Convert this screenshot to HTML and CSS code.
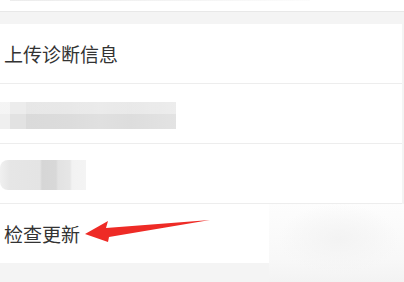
FILE: index.html
```html
<!DOCTYPE html>
<html lang="zh">
<head>
<meta charset="utf-8">
<link rel="stylesheet" href="styles.css">
</head>
<body>
<div class="top-strip"><span class="ghost-text"></span></div>
<div class="card">
  <div class="row"><span class="label">上传诊断信息</span></div>
  <div class="row"><span class="blob blob-long"></span></div>
  <div class="row"><span class="blob blob-short"></span></div>
  <div class="row last">
    <span class="label">检查更新</span>
    <svg class="arrow" width="130" height="26" viewBox="0 0 130 26">
      <polygon points="0,15 23,2 21,9 125,1 24,18 23,23" fill="#ee2b26"/>
    </svg>
  </div>
</div>
<div class="haze"></div>
</body>
</html>
```
FILE: styles.css
```css
html, body {
  margin: 0;
  padding: 0;
}
body {
  width: 404px;
  height: 282px;
  overflow: hidden;
  background: #f4f4f4;
  font-family: "Noto Sans CJK SC", "Noto Sans", sans-serif;
  position: relative;
}
.top-strip {
  height: 12px;
  background: #fff;
  border-bottom: 1px solid #e8e8e8;
  box-sizing: border-box;
  display: flex;
  align-items: flex-start;
  padding-left: 10px;
}
.ghost-text {
  width: 300px;
  height: 1px;
  background: linear-gradient(90deg, #ececec, #f4f4f4 60%, #fcfcfc);
}
.card {
  margin-top: 12px;
  background: #fff;
  margin-right: 2px;
}
.row {
  height: 59px;
  border-bottom: 1px solid #ededed;
  display: flex;
  align-items: center;
}
.row.last {
  border-bottom: none;
}
.label {
  font-size: 19px;
  color: #333;
  padding-left: 4px;
  line-height: 1;
}
.blob {
  display: block;
  filter: blur(0.6px);
}
.blob-long {
  width: 176px;
  height: 27px;
  margin-top: 4px;
  background:
    linear-gradient(180deg, rgba(255,255,255,0.35) 0, rgba(255,255,255,0.35) 12px, rgba(255,255,255,0) 12px),
    linear-gradient(90deg, #efefef 0, #efefef 10px, #e2e2e2 10px, #e2e2e2 26px, #dadada 26px, #dcdcdc 70px, #e0e0e0 100px, #dddddd 130px, #e3e3e3 176px);
}
.blob-short {
  width: 86px;
  height: 30px;
  margin-top: 2px;
  border-radius: 8px 0 0 8px;
  background:
    linear-gradient(90deg, #f0f0f0 0, #e6e6e6 10px, #e4e4e4 40px, #d6d6d6 42px, #d8d8d8 56px, #e2e2e2 58px, #e6e6e6 70px, #f2f2f2 72px, #f4f4f4 86px);
}
.arrow {
  margin-left: 5px;
  margin-top: -4px;
}
.haze {
  position: absolute;
  left: 269px;
  top: 204px;
  width: 135px;
  height: 78px;
  background:
    radial-gradient(ellipse 60px 35px at 70px 35px, #f3f3f3, rgba(250,250,250,0) 100%),
    linear-gradient(180deg, #fdfdfd, #f8f8f8 70%, #f3f3f3);
}
```
